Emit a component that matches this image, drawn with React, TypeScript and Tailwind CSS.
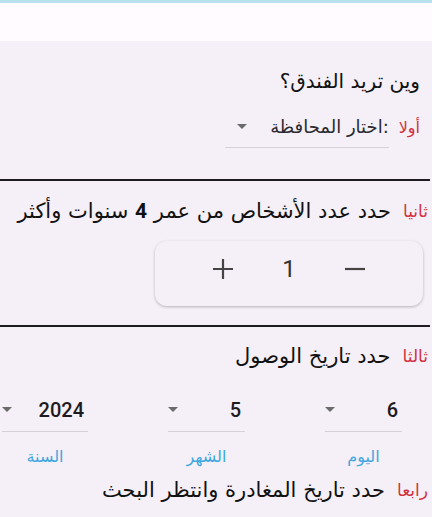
import React from 'react';

const Caret = () => (
  <svg width="10" height="6" viewBox="0 0 10 6" className="shrink-0">
    <path d="M0 0 L10 0 L5 5 Z" fill="#6b6b6b" />
  </svg>
);

const DateSelect = ({ value, label, width }: { value: string; label: string; width: string }) => (
  <div className="flex flex-col items-center">
    <div className={`flex items-center justify-between border-b border-[#d6d0d8] h-[44px] ${width}`}>
      <span className="text-[20px] font-medium text-[#1d1b20] pr-1 font-['Roboto']">{value}</span>
      <Caret />
    </div>
    <span className="mt-[13px] text-[16px] text-[#3ea7e0]">{label}</span>
  </div>
);

const Step = ({ label, children }: { label: string; children: React.ReactNode }) => (
  <div className="flex items-center pr-[4px]">
    <span className="text-[17px] text-[#d32f3f] ml-[12px]">{label}</span>
    <span className="text-[21px] text-[#111]">{children}</span>
  </div>
);

export default function App() {
  return (
    <div dir="rtl" className="w-[432px] h-[517px] overflow-hidden bg-[#f5eff7] text-[#1d1b20] font-['DejaVu_Sans',sans-serif]">
      {/* App bar */}
      <div className="h-[41px] bg-[#fffbfe] border-t-[3px] border-[#b8e2ee]" />

      {/* Step 1 */}
      <div className="pt-[25px] pr-[12px] text-[20px] leading-[30px] text-[#111]">وين تريد الفندق؟</div>
      <div className="flex items-center pr-[12px] mt-[12px]">
        <span className="text-[16px] text-[#d32f3f] ml-[10px]">أولا</span>
        <div className="flex items-center justify-between w-[164px] h-[40px] border-b border-[#d6d0d8] pb-[2px] pl-[12px]">
          <span className="text-[18px] text-[#2b2930]">:اختار المحافظة</span>
          <Caret />
        </div>
      </div>

      <div className="mt-[31px] h-[2px] w-[430px] bg-[#1d1b20] mr-auto" />

      {/* Step 2 */}
      <div className="mt-[15px]">
        <Step label="ثانيا">حدد عدد الأشخاص من عمر <b className="font-['Roboto']">4</b> سنوات وأكثر</Step>
      </div>
      <div className="flex justify-start pr-[9px] mt-[13px]">
        <div dir="ltr" className="w-[268px] h-[65px] rounded-[12px] bg-[#f5eff7] shadow-[0_1px_3px_rgba(0,0,0,0.25)] flex items-center justify-center gap-[48px] pb-[8px]">
          <svg width="22" height="22" viewBox="0 0 22 22">
            <path d="M11 1 V21 M1 11 H21" stroke="#444" strokeWidth="2.2" />
          </svg>
          <span className="text-[24px] text-[#333] font-['Roboto']">1</span>
          <svg width="22" height="22" viewBox="0 0 22 22">
            <path d="M1 11 H21" stroke="#444" strokeWidth="2.2" />
          </svg>
        </div>
      </div>

      <div className="mt-[19px] h-[2px] w-[430px] bg-[#1d1b20] mr-auto" />

      {/* Step 3 */}
      <div className="mt-[14px]">
        <Step label="ثالثا">حدد تاريخ الوصول</Step>
      </div>
      <div className="flex justify-between items-start pr-[30px] pl-[2px] mt-[16px]">
        <DateSelect value="6" label="اليوم" width="w-[77px]" />
        <DateSelect value="5" label="الشهر" width="w-[77px]" />
        <DateSelect value="2024" label="السنة" width="w-[86px]" />
      </div>

      {/* Step 4 */}
      <div className="mt-[6px]">
        <Step label="رابعا">حدد تاريخ المغادرة وانتظر البحث</Step>
      </div>
    </div>
  );
}
